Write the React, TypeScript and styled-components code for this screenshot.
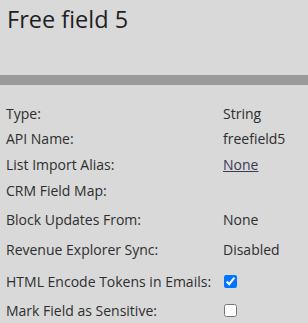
import styled, { createGlobalStyle } from 'styled-components';

const GlobalStyle = createGlobalStyle`
  html, body {
    margin: 0;
    padding: 0;
    background: #d9d9d9;
  }
  body {
    font-family: "Open Sans", "Liberation Sans", sans-serif;
    color: #2b2b2b;
  }
`;

const Page = styled.div`
  width: 308px;
  height: 323px;
  background: #d9d9d9;
  overflow: hidden;
`;

const Header = styled.div`
  height: 75px;
  padding: 0 7px;
  box-sizing: border-box;
`;

const Title = styled.h1`
  margin: 0;
  padding-top: 3px;
  font-size: 23.5px;
  font-weight: 400;
  color: #1f1f1f;
  line-height: 32px;
`;

const Divider = styled.div`
  height: 10px;
  background: #9b9b9e;
`;

const List = styled.div`
  padding: 15px 0 0 6px;
`;

const Row = styled.div<{ $h: number }>`
  display: grid;
  grid-template-columns: 217px 1fr;
  align-items: center;
  height: ${(p) => p.$h}px;
  font-size: 14px;
`;

const Label = styled.span`
  color: #2e2e2e;
`;

const Value = styled.span`
  color: #2e2e2e;
  display: flex;
  align-items: center;
`;

const LinkValue = styled.a`
  color: #3b3b55;
  text-decoration: underline;
  cursor: pointer;
`;

const Check = styled.input`
  width: 13px;
  height: 13px;
  margin: 0 0 0 1px;
`;

export default function App() {
  return (
    <Page>
      <GlobalStyle />
      <Header>
        <Title>Free field 5</Title>
      </Header>
      <Divider />
      <List>
        <Row $h={26}>
          <Label>Type:</Label>
          <Value>String</Value>
        </Row>
        <Row $h={25}>
          <Label>API Name:</Label>
          <Value>freefield5</Value>
        </Row>
        <Row $h={26}>
          <Label>List Import Alias:</Label>
          <Value>
            <LinkValue>None</LinkValue>
          </Value>
        </Row>
        <Row $h={27}>
          <Label>CRM Field Map:</Label>
          <Value />
        </Row>
        <Row $h={30}>
          <Label>Block Updates From:</Label>
          <Value>None</Value>
        </Row>
        <Row $h={31}>
          <Label>Revenue Explorer Sync:</Label>
          <Value>Disabled</Value>
        </Row>
        <Row $h={32}>
          <Label>HTML Encode Tokens in Emails:</Label>
          <Value>
            <Check type="checkbox" defaultChecked />
          </Value>
        </Row>
        <Row $h={26}>
          <Label>Mark Field as Sensitive:</Label>
          <Value>
            <Check type="checkbox" />
          </Value>
        </Row>
      </List>
    </Page>
  );
}
